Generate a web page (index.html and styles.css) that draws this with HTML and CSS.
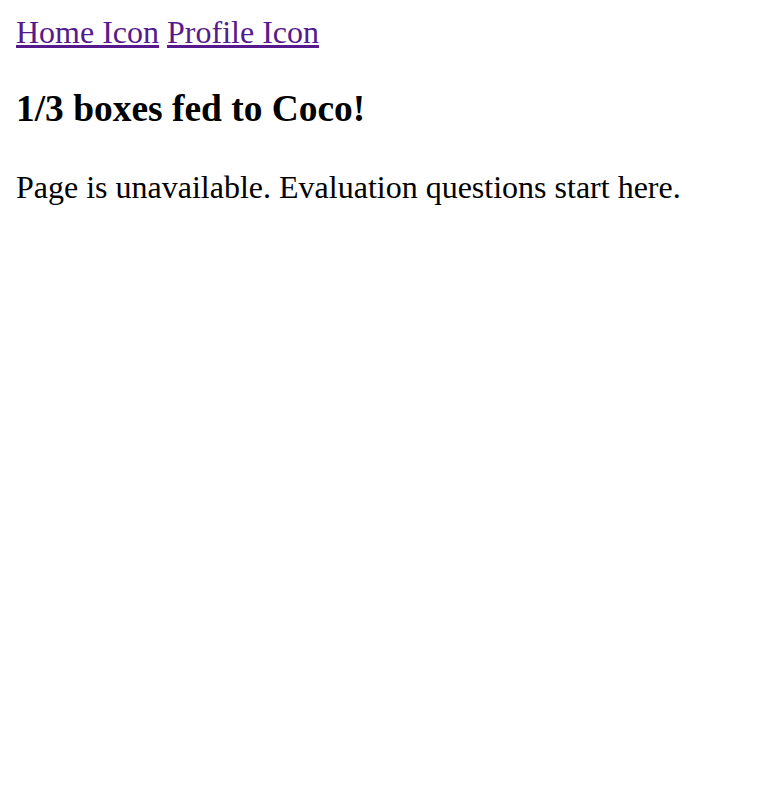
FILE: index.html
```html
<!DOCTYPE html>
<html>
<head>
<meta charset="utf-8">
<link rel="stylesheet" href="styles.css">
</head>
<body class="page">
<div class="nav"><a class="nav-link" href="#">Home Icon</a> <a class="nav-link" href="#">Profile Icon</a></div>
<h3 class="title">1/3 boxes fed to Coco!</h3>
<p class="message">Page is unavailable. Evaluation questions start here.</p>
</body>
</html>
```
FILE: styles.css
```css
html { background: #fff; }
.page {
  margin: 16px;
  font-family: "Liberation Serif", "Times New Roman", serif;
  font-size: 32px;
  color: #000;
}
.nav { line-height: 32.8px; padding-bottom: 4px; }
.nav-link { color: #551a8b; text-decoration: underline; }
.title { font-size: 37.44px; font-weight: bold; margin: 37.44px 0; line-height: 38.6px; padding-bottom: 4.4px; }
.message { margin: 32px 0; line-height: 32px; padding-bottom: 4.8px; }
```
